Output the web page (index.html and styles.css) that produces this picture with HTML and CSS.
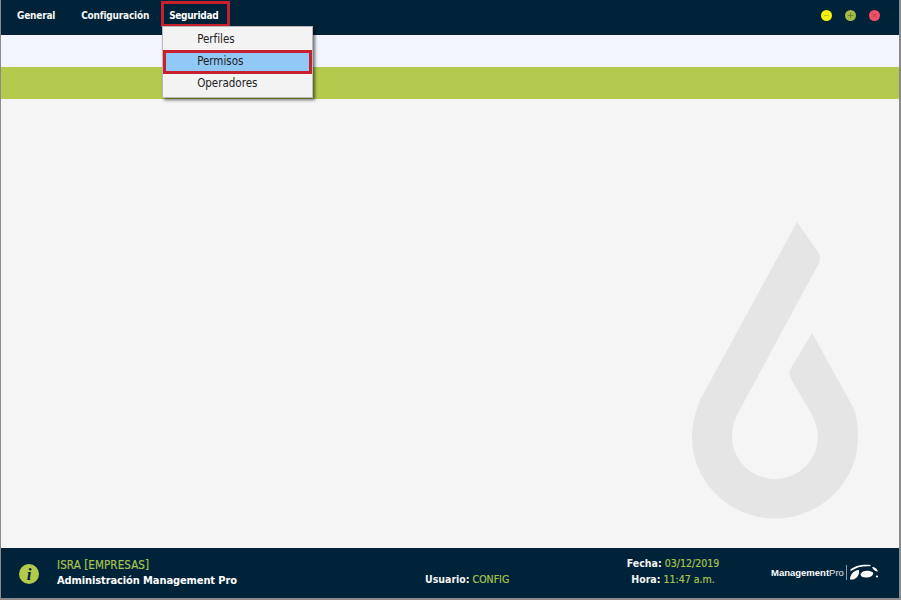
FILE: index.html
```html
<!DOCTYPE html>
<html lang="es">
<head>
<meta charset="utf-8">
<title>Management Pro</title>
<link rel="stylesheet" href="styles.css">
</head>
<body>
<div class="window">
  <header class="topbar">
    <nav class="menu">
      <span class="menu-item menu-item-general">General</span>
      <span class="menu-item menu-item-config">Configuración</span>
      <span class="menu-item menu-item-open">Seguridad
        <div class="dropdown">
          <div class="drop-row">Perfiles</div>
          <div class="drop-row drop-row-active">Permisos</div>
          <div class="drop-row">Operadores</div>
        </div>
      </span>
    </nav>
    <div class="controls">
      <svg class="ctl" viewBox="0 0 12 12"><circle cx="6" cy="6" r="6" fill="#f6f20a"/><path d="M3.5 6h5" stroke="#b5b23a" stroke-width="1"/></svg>
      <svg class="ctl" viewBox="0 0 12 12"><circle cx="6" cy="6" r="6" fill="#a4bb45"/><path d="M3 6h6M6 3v6" stroke="#6d7f2c" stroke-width="1"/></svg>
      <svg class="ctl" viewBox="0 0 12 12"><circle cx="6" cy="6" r="6" fill="#ee5067"/><path d="M4 4l4 4M8 4l-4 4" stroke="#b23c50" stroke-width="1"/></svg>
    </div>
  </header>
  <div class="band-light"></div>
  <div class="band-green"></div>
  <main class="content">
    <svg class="watermark" viewBox="0 0 170 300" aria-hidden="true">
      <path fill="#e5e5e5" d="M105 2 L126 32 Q130 38 126 45 L46 193 C42 201 40 208 40 217 A43 42 0 0 0 126 217 C126 208 123 201 119 193 L99 159 Q96 153 99 148 L120 113 L161 187 C165 196 166 206 166 217 A83 81.5 0 0 1 0 217 C0 206 3 193 8 180 Z"/>
    </svg>
  </main>
  <footer class="statusbar">
    <div class="info">
      <svg class="info-icon" viewBox="0 0 20 20"><circle cx="10" cy="10" r="10" fill="#b3ca4c"/><text x="10" y="15.5" text-anchor="middle" class="info-i">i</text></svg>
      <div class="info-text">
        <div class="accent accent-title">ISRA [EMPRESAS]</div>
        <div class="strong">Administración Management Pro</div>
      </div>
    </div>
    <div class="user"><b>Usuario:</b> <span class="accent">CONFIG</span></div>
    <div class="when">
      <div><b>Fecha:</b> <span class="accent">03/12/2019</span></div>
      <div><b>Hora:</b> <span class="accent">11:47 a.m.</span></div>
    </div>
    <div class="brand">
      <span class="brand-name"><b>Management</b>Pro</span>
      <svg class="brand-mark" viewBox="0 0 30 17">
        <path d="M1 15.500 C1 11 4 6.500 10 6 C11 11 7 16.500 1 15.500Z" fill="#fff"/>
        <path d="M11.500 10 C13 6.500 20 5.500 24 8.500 C25 11.500 21 13.500 17 13.500 C13.500 13.500 11.500 12.500 11.500 10Z" fill="#fff"/>
        <path d="M1 6 C6 1 14 0 22 1 L21 2.200 C14 1.800 7 3 2 7Z" fill="#fff"/>
        <path d="M23 3 C26 3 28 5 29 7.500 C26 7.500 24 5.500 23 3Z" fill="#fff"/>
        <circle cx="28" cy="12.500" r="1.100" fill="#fff"/>
      </svg>
    </div>
  </footer>
</div>
</body>
</html>
```
FILE: styles.css
```css
* { box-sizing: border-box; }
html, body { margin: 0; padding: 0; }
body {
  width: 901px;
  height: 600px;
  overflow: hidden;
  background: #8a8a8a;
  font-family: "DejaVu Sans", "Open Sans", sans-serif;
  font-stretch: condensed;
}
.window {
  width: 899px;
  height: 598px;
  padding-left: 1px;
  display: flex;
  flex-direction: column;
}
.topbar {
  height: 35px;
  flex: none;
  background: #00233a;
  display: flex;
  justify-content: space-between;
  align-items: center;
  padding: 0 19px 4px 16px;
}
.menu { display: flex; align-items: center; }
.menu-item {
  color: #f4f4f4;
  font-size: 10px;
  font-weight: 700;
  letter-spacing: -0.3px;
  line-height: 14px;
  position: relative;
}
.menu-item-general { margin-right: 26px; letter-spacing: -0.2px; }
.menu-item-config { margin-right: 20px; letter-spacing: -0.2px; }
.menu-item-open { color: #fff; }
.menu-item-open::before {
  content: "";
  box-sizing: border-box;
  position: absolute;
  left: -8px;
  top: -8px;
  width: 69px;
  height: 26px;
  border: 3px solid #c8202f;
}
.dropdown {
  position: absolute;
  left: -7px;
  top: 17px;
  width: 151px;
  height: 72px;
  background: #f3f3f3;
  border: 1px solid #b9b9b9;
  box-shadow: 2px 2px 3px rgba(0, 0, 0, .55);
  padding: 2px 1px;
  z-index: 5;
  font-weight: 400;
  font-size: 11.5px;
  letter-spacing: 0;
  color: #222;
}
.drop-row { height: 22px; line-height: 21px; padding-left: 33px; }
.drop-row-active {
  background: #90c8f6;
  outline: 3px solid #c8202f;
  outline-offset: -2px;
}
.controls { display: flex; gap: 13px; }
.ctl { width: 11px; height: 11px; display: block; }
.band-light { height: 32px; flex: none; background: #f2f5fd; }
.band-green { height: 32px; flex: none; background: #b3ca4c; }
.content {
  flex: 1;
  background: #f5f5f5;
  position: relative;
}
.watermark {
  position: absolute;
  left: 691px;
  top: 121px;
  width: 170px;
  height: 300px;
}
.statusbar {
  height: 50px;
  flex: none;
  background: #00233a;
  color: #f4f4f4;
  font-size: 10.5px;
  position: relative;
  display: flex;
  align-items: stretch;
}
.statusbar b { font-weight: 700; }
.accent { color: #a9c24e; -webkit-text-stroke: 0.2px #a9c24e; }
.accent-title { font-size: 11.5px; letter-spacing: 0.1px; }
.info { display: flex; align-items: center; gap: 18px; padding-left: 18px; width: 424px; }
.info-icon { width: 20px; height: 20px; flex: none; margin-top: 1px; }
.info-i { font-family: "Liberation Serif", serif; font-style: italic; font-weight: 700; font-size: 17px; fill: #00233a; }
.info-text { line-height: 16px; font-size: 11px; }
.strong { font-weight: 700; color: #fff; letter-spacing: -0.1px; }
.user { width: 157px; padding-top: 23px; line-height: 16px; }
.when { width: 182px; padding-top: 7px; line-height: 16px; text-align: center; }
.brand { display: flex; align-items: center; gap: 2px; padding-left: 7px; margin-top: -2px; }
.brand-name {
  color: #e8e8e8;
  font-family: "Liberation Sans", sans-serif;
  font-stretch: normal;
  font-size: 9.5px;
  padding-right: 2px;
  border-right: 1px solid #8a98a2;
  line-height: 15px;
}
.brand-name b { color: #fff; }
.brand-mark { width: 30px; height: 17px; display: block; }
```
